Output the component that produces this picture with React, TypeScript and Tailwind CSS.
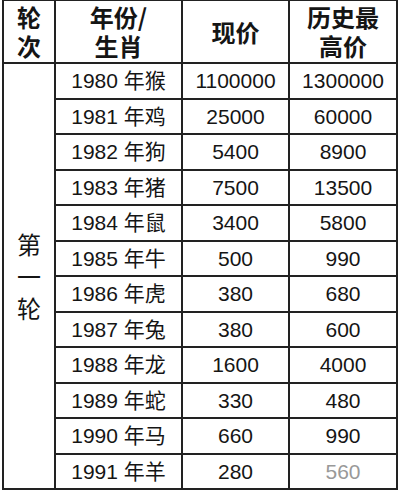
const rows: [string, string, string][] = [
  ["1980 年猴", "1100000", "1300000"],
  ["1981 年鸡", "25000", "60000"],
  ["1982 年狗", "5400", "8900"],
  ["1983 年猪", "7500", "13500"],
  ["1984 年鼠", "3400", "5800"],
  ["1985 年牛", "500", "990"],
  ["1986 年虎", "380", "680"],
  ["1987 年兔", "380", "600"],
  ["1988 年龙", "1600", "4000"],
  ["1989 年蛇", "330", "480"],
  ["1990 年马", "660", "990"],
  ["1991 年羊", "280", "560"],
];

const cell = "border-2 border-[#222] text-center align-middle p-0";

function Lines({ lines, gap }: { lines: string[]; gap: string }) {
  return (
    <div className={`flex flex-col items-center ${gap}`}>
      {lines.map((l) => (
        <span key={l} className="block leading-none">
          {l}
        </span>
      ))}
    </div>
  );
}

export default function App() {
  return (
    <div className="w-[400px] h-[494px] bg-white overflow-hidden font-['Liberation_Sans','Noto_Sans_CJK_SC',sans-serif] text-[#151515]">
      <table className="table-fixed border-collapse w-[396px] ml-[2px] -mt-[1px]">
        <colgroup>
          <col className="w-[52px]" />
          <col className="w-[127px]" />
          <col className="w-[107px]" />
          <col className="w-[108px]" />
        </colgroup>
        <thead>
          <tr className="h-[63px] text-[24px] font-bold font-['Noto_Sans_CJK_SC',sans-serif]">
            <th className={cell}>
              <Lines lines={["轮", "次"]} gap="gap-[5px]" />
            </th>
            <th className={cell}>
              <Lines lines={["年份/", "生肖"]} gap="gap-[5px]" />
            </th>
            <th className={cell}>现价</th>
            <th className={cell}>
              <Lines lines={["历史最", "高价"]} gap="gap-[5px]" />
            </th>
          </tr>
        </thead>
        <tbody className="text-[21px] leading-none">
          {rows.map(([year, now, high], i) => (
            <tr key={year} className="h-[35.5px]">
              {i === 0 && (
                <td
                  rowSpan={12}
                  className={`${cell} text-[24px] font-['Noto_Sans_CJK_SC',sans-serif]`}
                >
                  <Lines lines={["第", "一", "轮"]} gap="gap-[8px]" />
                </td>
              )}
              <td className={cell}>{year}</td>
              <td className={cell}>{now}</td>
              <td className={`${cell} ${i === 11 ? "text-[#999]" : ""}`}>{high}</td>
            </tr>
          ))}
        </tbody>
      </table>
    </div>
  );
}
